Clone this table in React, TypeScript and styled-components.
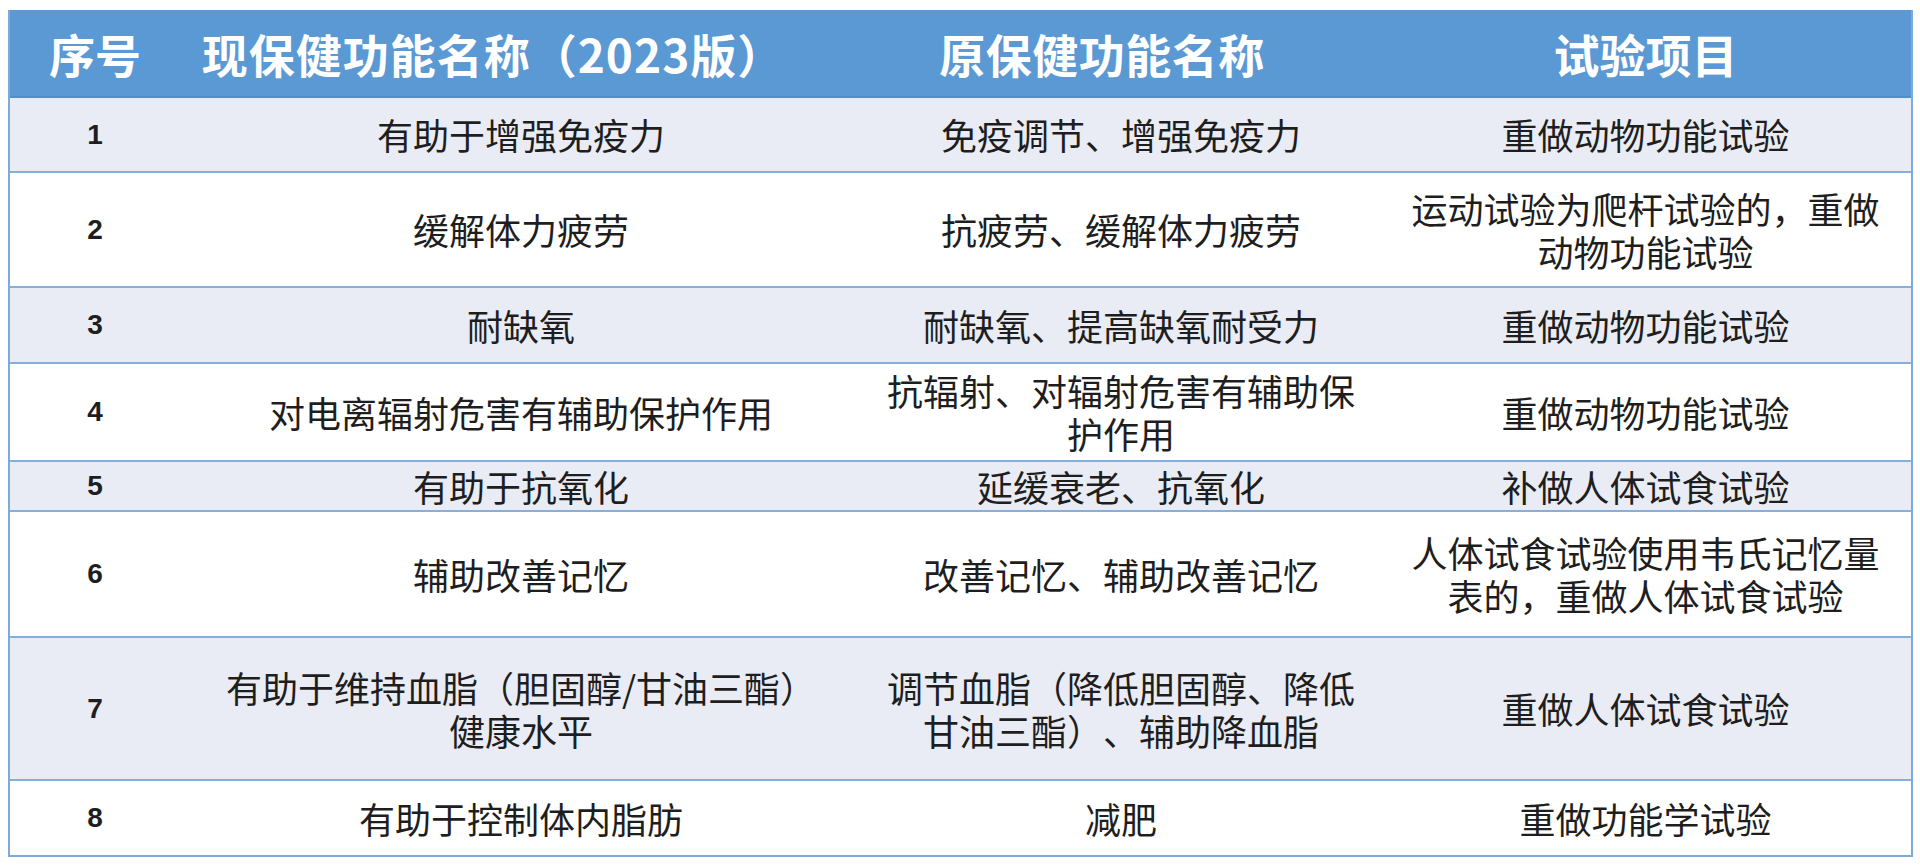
import styled, { createGlobalStyle } from "styled-components";

const GlobalStyle = createGlobalStyle`
  html, body {
    margin: 0;
    padding: 0;
    background: #ffffff;
  }
  * {
    box-sizing: border-box;
  }
`;

const Page = styled.div`
  width: 1920px;
  height: 865px;
  padding: 10px 7px 0 8px;
  background: #ffffff;
  font-family: "Noto Sans CJK SC", "Noto Sans", sans-serif;
  text-spacing-trim: space-all;
`;

const Table = styled.div`
  display: flex;
  flex-direction: column;
  border-left: 2px solid #7eaadb;
  border-right: 2px solid #7eaadb;
  border-bottom: 2px solid #7eaadb;
`;

const cols = "170px 682px 518px 1fr";

const HeadRow = styled.div`
  display: grid;
  grid-template-columns: ${cols};
  height: 88px;
  background: #5a99d4;
  border-bottom: 2px solid #4f8fcb;
`;

const HeadCell = styled.div<{ $shift?: number; $spacing?: number }>`
  display: flex;
  align-items: center;
  justify-content: center;
  padding-right: ${(p) => p.$shift ?? 0}px;
  color: #ffffff;
  font-size: 46px;
  font-weight: 700;
  white-space: nowrap;
  letter-spacing: ${(p) => p.$spacing ?? 0}px;
`;

const Row = styled.div<{ $h: number; $shaded: boolean }>`
  display: grid;
  grid-template-columns: ${cols};
  height: ${(p) => p.$h}px;
  background: ${(p) => (p.$shaded ? "#e9ecf4" : "#ffffff")};
  border-bottom: 2px solid #86afdc;

  &:last-child {
    border-bottom: none;
  }
`;

const NumCell = styled.div`
  display: flex;
  align-items: center;
  justify-content: center;
  font-family: "Liberation Sans", Arial, sans-serif;
  font-weight: 700;
  font-size: 28px;
  color: #1e1e1e;
`;

const Cell = styled.div`
  display: flex;
  align-items: center;
  justify-content: center;
  text-align: center;
  font-size: 36px;
  line-height: 43px;
  color: #1e1e1e;
  white-space: nowrap;
`;

type Item = {
  no: string;
  now: string[];
  old: string[];
  test: string[];
  h: number;
};

const rows: Item[] = [
  { no: "1", now: ["有助于增强免疫力"], old: ["免疫调节、增强免疫力"], test: ["重做动物功能试验"], h: 75 },
  {
    no: "2",
    now: ["缓解体力疲劳"],
    old: ["抗疲劳、缓解体力疲劳"],
    test: ["运动试验为爬杆试验的，重做", "动物功能试验"],
    h: 115,
  },
  { no: "3", now: ["耐缺氧"], old: ["耐缺氧、提高缺氧耐受力"], test: ["重做动物功能试验"], h: 76 },
  {
    no: "4",
    now: ["对电离辐射危害有辅助保护作用"],
    old: ["抗辐射、对辐射危害有辅助保", "护作用"],
    test: ["重做动物功能试验"],
    h: 98,
  },
  { no: "5", now: ["有助于抗氧化"], old: ["延缓衰老、抗氧化"], test: ["补做人体试食试验"], h: 50 },
  {
    no: "6",
    now: ["辅助改善记忆"],
    old: ["改善记忆、辅助改善记忆"],
    test: ["人体试食试验使用韦氏记忆量", "表的，重做人体试食试验"],
    h: 126,
  },
  {
    no: "7",
    now: ["有助于维持血脂（胆固醇/甘油三酯）", "健康水平"],
    old: ["调节血脂（降低胆固醇、降低", "甘油三酯）、辅助降血脂"],
    test: ["重做人体试食试验"],
    h: 143,
  },
  { no: "8", now: ["有助于控制体内脂肪"], old: ["减肥"], test: ["重做功能学试验"], h: 74 },
];

function Lines({ lines }: { lines: string[] }) {
  return (
    <Cell>
      <div>
        {lines.map((l, i) => (
          <div key={i}>{l}</div>
        ))}
      </div>
    </Cell>
  );
}

function App() {
  return (
    <>
      <GlobalStyle />
      <Page>
        <Table>
          <HeadRow>
            <HeadCell>序号</HeadCell>
            <HeadCell $shift={56} $spacing={1}>
              现保健功能名称（2023版）
            </HeadCell>
            <HeadCell $shift={38} $spacing={0.5}>
              原保健功能名称
            </HeadCell>
            <HeadCell>试验项目</HeadCell>
          </HeadRow>
          {rows.map((r, i) => (
            <Row key={r.no} $h={r.h} $shaded={i % 2 === 0}>
              <NumCell>{r.no}</NumCell>
              <Lines lines={r.now} />
              <Lines lines={r.old} />
              <Lines lines={r.test} />
            </Row>
          ))}
        </Table>
      </Page>
    </>
  );
}

export default App;
